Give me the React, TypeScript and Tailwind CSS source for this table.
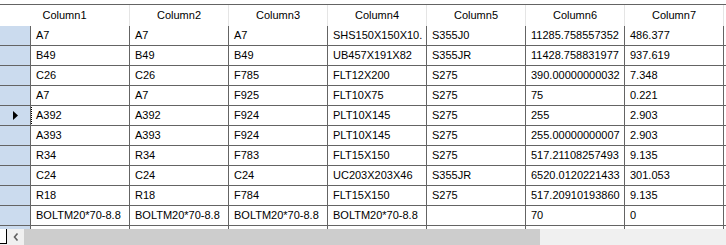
const headers = ['Column1', 'Column2', 'Column3', 'Column4', 'Column5', 'Column6', 'Column7'];

const rows: string[][] = [
  ['A7', 'A7', 'A7', 'SHS150X150X10.', 'S355J0', '11285.758557352', '486.377'],
  ['B49', 'B49', 'B49', 'UB457X191X82', 'S355JR', '11428.758831977', '937.619'],
  ['C26', 'C26', 'F785', 'FLT12X200', 'S275', '390.00000000032', '7.348'],
  ['A7', 'A7', 'F925', 'FLT10X75', 'S275', '75', '0.221'],
  ['A392', 'A392', 'F924', 'PLT10X145', 'S275', '255', '2.903'],
  ['A393', 'A393', 'F924', 'PLT10X145', 'S275', '255.00000000007', '2.903'],
  ['R34', 'R34', 'F783', 'FLT15X150', 'S275', '517.21108257493', '9.135'],
  ['C24', 'C24', 'C24', 'UC203X203X46', 'S355JR', '6520.0120221433', '301.053'],
  ['R18', 'R18', 'F784', 'FLT15X150', 'S275', '517.20910193860', '9.135'],
  ['BOLTM20*70-8.8', 'BOLTM20*70-8.8', 'BOLTM20*70-8.8', 'BOLTM20*70-8.8', '', '70', '0'],
];

const currentRow = 4;

export default function App() {
  return (
    <div className="w-[726px] h-[245px] bg-white overflow-hidden flex flex-col font-['Liberation_Sans',Arial,sans-serif] text-[11px] text-black leading-none">
      <div className="h-[4px] shrink-0" />

      {/* Column headers */}
      <div className="h-[22px] shrink-0 flex border-t border-[#646464]">
        {headers.map((h, i) => (
          <div
            key={h}
            className={`${i === 0 ? 'w-[130px]' : 'w-[99px]'} shrink-0 flex items-center justify-center border-r border-[#e5e5e5]`}
          >
            {h}
          </div>
        ))}
      </div>

      {/* Rows */}
      {rows.map((row, r) => (
        <div key={r} className="h-[20px] shrink-0 flex border-b border-[#646464]">
          <div className="w-[31px] shrink-0 flex items-center pl-[13px] bg-[#cbdbee] border-r border-[#646464]">
            {r === currentRow && (
              <svg width="5" height="9" viewBox="0 0 5 9">
                <polygon points="0,0 5,4.5 0,9" fill="#000" />
              </svg>
            )}
          </div>
          {row.map((cell, c) => (
            <div
              key={c}
              className="relative w-[99px] shrink-0 flex items-center pl-[5px] whitespace-nowrap overflow-hidden border-r border-[#646464]"
            >
              {cell}
              {r === currentRow && c === 0 && (
                <div className="absolute -top-px -right-px -bottom-px left-0 border border-dotted border-black" />
              )}
            </div>
          ))}
        </div>
      ))}

      {/* partial new row under the scrollbar */}
      <div className="flex-1 flex">
        <div className="w-[31px] shrink-0 bg-[#cbdbee] border-r border-[#646464]" />
        {headers.map((h) => (
          <div key={h} className="w-[99px] shrink-0 border-r border-[#646464]" />
        ))}
      </div>

      {/* Horizontal scrollbar */}
      <div className="h-[16px] shrink-0 flex bg-[#f0f0f0]">
        <div className="w-[7px] h-[15px] shrink-0 bg-white border-r border-b border-black" />
        <div className="w-[17px] shrink-0 flex items-center justify-center">
          <svg width="6" height="8" viewBox="0 0 6 8">
            <polyline points="4.5,0.5 1.5,4 4.5,7.5" fill="none" stroke="#606060" strokeWidth="1.6" />
          </svg>
        </div>
        <div className="w-[516px] shrink-0 bg-[#cdcdcd]" />
      </div>
    </div>
  );
}
